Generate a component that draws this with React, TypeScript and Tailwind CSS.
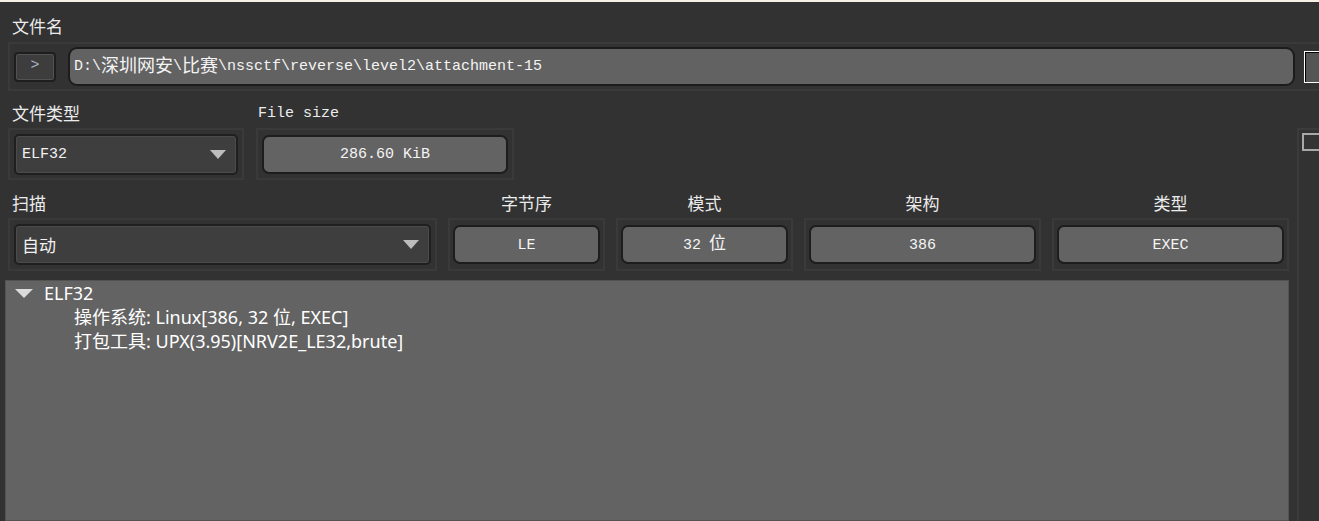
import type { ReactNode } from "react";

const cjk = "font-['Noto_Sans_CJK_SC',sans-serif]";
const mono = "font-['Liberation_Mono','Noto_Sans_CJK_SC',monospace]";

const Frame = ({ className, children }: { className: string; children: ReactNode }) => (
  <div className={`flex items-center border-2 border-[#3a3a3a] ${className}`}>{children}</div>
);

const ValueBox = ({ children }: { children: ReactNode }) => (
  <div
    className={`flex h-[39px] flex-1 items-center justify-center rounded-[7px] border-2 border-[#1d1d1d] bg-[#636363] pt-[3px] text-[15px] text-[#f5f5f5] ${mono}`}
  >
    {children}
  </div>
);

const Combo = ({ children, cn }: { children: ReactNode; cn?: boolean }) => (
  <div className="flex h-[41px] flex-1 items-center justify-between rounded-[5px] border-2 border-[#1f1f1f] bg-[#3e3e3e] pr-[10px] pl-[6px] shadow-[inset_0_0_0_1px_#4b4b4b]">
    <span className={`text-[#f2f2f2] ${cn ? `text-[17px] ${cjk}` : `pt-[3px] text-[15px] ${mono}`}`}>{children}</span>
    <svg width="16" height="9" viewBox="0 0 16 9">
      <path d="M0 0 H16 L8 9 Z" fill="#bdbdbd" />
    </svg>
  </div>
);

const ColLabel = ({ w, children }: { w: string; children: ReactNode }) => (
  <div className={`${w} text-center text-[17px] leading-[20px] text-[#ececec] ${cjk}`}>{children}</div>
);

export default function App() {
  return (
    <div className="flex h-[521px] w-[1319px] flex-col overflow-hidden bg-[#323232]">
      <div className="h-[2px] bg-[#f6f1e4]" />

      <div className={`h-[40px] pt-[14px] pl-[12px] text-[17px] leading-[20px] text-[#ececec] ${cjk}`}>文件名</div>

      <Frame className="ml-[8px] h-[49px] w-[1330px] gap-[12px] pl-[4px]">
        <div
          className={`flex h-[30px] w-[42px] items-center justify-center rounded-[4px] border-2 border-[#1e1e1e] bg-[#3d3d3d] text-[15px] text-[#a9b4c4] shadow-[inset_0_0_0_1px_#525252] ${mono}`}
        >
          &gt;
        </div>
        <div
          className={`flex h-[39px] w-[1227px] items-center rounded-[9px] border-2 border-[#1c1c1c] bg-[#626262] pt-[2px] pl-[4px] text-[15px] text-[#f4f4f4] ${mono}`}
        >
          D:\<span className="text-[18px]">深圳网安</span>\<span className="text-[18px]">比赛</span>
          \nssctf\reverse\level2\attachment-15
        </div>
        <div className="ml-[-3px] h-[32px] w-[30px] border border-white bg-[#555] shadow-[inset_1px_1px_0_#000]" />
      </Frame>

      <div className="flex flex-1">
        <div className="flex w-[1292px] flex-col">
          <div className="flex h-[37px] pt-[13px] text-[#ececec]">
            <div className={`mt-[-1px] w-[258px] pl-[12px] text-[17px] leading-[20px] ${cjk}`}>文件类型</div>
            <div className={`text-[15px] leading-[20px] ${mono}`}>File size</div>
          </div>

          <div className="flex h-[52px] gap-[12px] pl-[8px]">
            <Frame className="w-[236px] px-[4px]">
              <Combo>ELF32</Combo>
            </Frame>
            <Frame className="w-[258px] px-[4px]">
              <ValueBox>286.60 KiB</ValueBox>
            </Frame>
          </div>

          <div className="flex h-[38px] gap-[11px] pt-[13px] pl-[8px]">
            <div className={`w-[429px] pl-[4px] text-[17px] leading-[20px] text-[#ececec] ${cjk}`}>扫描</div>
            <ColLabel w="w-[157px]">字节序</ColLabel>
            <ColLabel w="w-[177px]">模式</ColLabel>
            <ColLabel w="w-[237px]">架构</ColLabel>
            <ColLabel w="w-[237px]">类型</ColLabel>
          </div>

          <div className="flex h-[53px] gap-[11px] pl-[8px]">
            <Frame className="w-[429px] px-[4px]">
              <Combo cn>自动</Combo>
            </Frame>
            <Frame className="w-[157px] px-[3px]">
              <ValueBox>LE</ValueBox>
            </Frame>
            <Frame className="w-[177px] px-[3px]">
              <ValueBox>
                32 <span className="mt-[-3px] ml-[8px] text-[17px]">位</span>
              </ValueBox>
            </Frame>
            <Frame className="w-[237px] px-[3px]">
              <ValueBox>386</ValueBox>
            </Frame>
            <Frame className="w-[237px] px-[3px]">
              <ValueBox>EXEC</ValueBox>
            </Frame>
          </div>

          <div
            className={`mt-[9px] ml-[5px] flex-1 border border-[#535353] bg-[#636363] text-[18px] leading-[24px] text-white ${cjk}`}
          >
            <div className="flex items-center">
              <svg className="mr-[11px] ml-[9px]" width="18" height="9" viewBox="0 0 18 9">
                <path d="M0 0 H18 L9 9 Z" fill="#dcdcdc" />
              </svg>
              <span className="font-['Noto_Sans','Noto_Sans_CJK_SC',sans-serif]">ELF32</span>
            </div>
            <div className="pl-[68px] font-['Noto_Sans','Noto_Sans_CJK_SC',sans-serif]">
              <div>操作系统: Linux[386, 32 位, EXEC]</div>
              <div>打包工具: UPX(3.95)[NRV2E_LE32,brute]</div>
            </div>
          </div>
        </div>

        <div className="mt-[37px] ml-[8px] flex-1 border-t-2 border-l-2 border-[#3b3b3b] pt-[3px] pl-[3px]">
          <div className="h-[18px] w-[20px] border-2 border-[#a8a8a8] bg-[#343434]" />
        </div>
      </div>
    </div>
  );
}
